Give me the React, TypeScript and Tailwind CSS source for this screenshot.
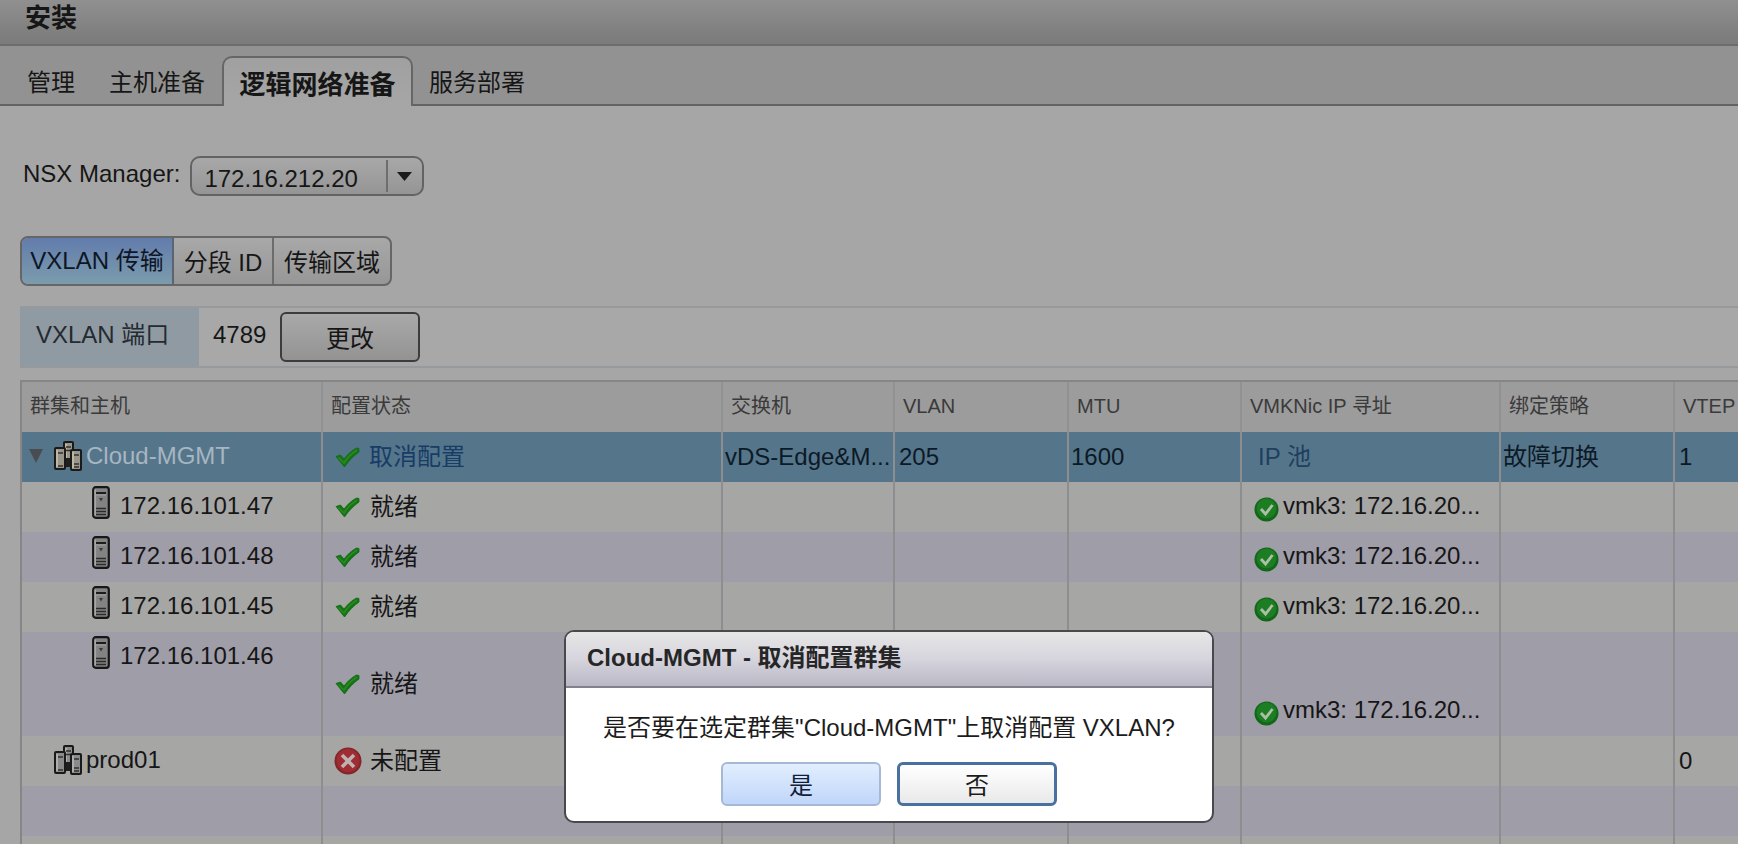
import React from "react";

function ClusterIcon({ warm = false }: { warm?: boolean }) {
  const face = warm ? "#99958a" : "#8b8b8b";
  const lite = warm ? "#bdb8a2" : "#aeaeae";
  return (
    <svg width="28" height="30" viewBox="0 0 28 30" className="shrink-0" aria-hidden="true">
      <rect x="10" y="1" width="9" height="20" rx="1" fill={face} stroke="#1a1a1a" strokeWidth="2" />
      <path d="M12 3v14" stroke={lite} strokeWidth="2" />
      <path d="M12 6h5M12 9.500h5" stroke="#33322e" strokeWidth="1.500" />
      <path d="M11 17h7v9h-7z" fill="#1f1f1f" />
      <rect x="1" y="7" width="10" height="21" rx="1" fill={face} stroke="#1a1a1a" strokeWidth="2" />
      <path d="M3 9v17" stroke={lite} strokeWidth="2" />
      <path d="M4 12h5M4 25h5" stroke="#33322e" strokeWidth="1.500" />
      <rect x="17" y="9" width="10" height="20" rx="1" fill={face} stroke="#1a1a1a" strokeWidth="2" />
      <path d="M19 11v16" stroke={lite} strokeWidth="2" />
      <path d="M20 14h5M20 23h5M20 26h5" stroke="#33322e" strokeWidth="1.500" />
    </svg>
  );
}

function HostIcon() {
  return (
    <svg width="18" height="33" viewBox="0 0 18 33" className="shrink-0" aria-hidden="true">
      <rect x="1.2" y="1.2" width="15.6" height="30.6" rx="2.5" fill="#838383" stroke="#171717" strokeWidth="2.2" />
      <path d="M3.2 3.500v26" stroke="#a6a6a6" strokeWidth="1.8" />
      <path d="M4 7h10" stroke="#1d1d1d" strokeWidth="2" />
      <path d="M4 9h10" stroke="#a3a3a3" strokeWidth="1" />
      <path d="M7 12h4l-2 3.500z" fill="#3a3a3a" />
      <path d="M4 22.500h10M4 25.500h10M4 28.500h10" stroke="#2b2b2b" strokeWidth="1.600" />
    </svg>
  );
}

function CheckIcon() {
  return (
    <svg width="25" height="21" viewBox="0 0 25 21" className="shrink-0" aria-hidden="true">
      <path d="M1 9.500l4.500-1.500 3.500 4C12.500 7.500 16.500 3.500 21.500 1L24 1.500 24 5C18.500 9 14 13.500 9.500 20z" fill="#137317" stroke="#126b14" strokeWidth="0.8" />
      <path d="M3.500 10.500l5.500 5.500C12 11 16.500 6.500 22 3" fill="none" stroke="#2c8a1c" strokeWidth="1.600" />
    </svg>
  );
}

function OkIcon() {
  return (
    <svg width="25" height="25" viewBox="0 0 25 25" className="shrink-0" aria-hidden="true">
      <circle cx="12.5" cy="12.5" r="12" fill="#12661a" />
      <circle cx="12.5" cy="11.5" r="10" fill="#1d7d22" />
      <path d="M7 12l4.500 5 7-9" fill="none" stroke="#adbfa9" strokeWidth="2.800" />
    </svg>
  );
}

function ErrorIcon() {
  return (
    <svg width="28" height="28" viewBox="0 0 28 28" className="shrink-0" aria-hidden="true">
      <circle cx="14" cy="14" r="13.500" fill="#83252b" />
      <circle cx="14" cy="13.500" r="11.500" fill="#a02c33" />
      <path d="M8 8l12 12M20 8L8 20" stroke="#bdb2b0" strokeWidth="3.600" />
    </svg>
  );
}

const columns = [
  { title: "群集和主机", width: "w-[301px]" },
  { title: "配置状态", width: "w-[400px]" },
  { title: "交换机", width: "w-[172px]" },
  { title: "VLAN", width: "w-[174px]" },
  { title: "MTU", width: "w-[173px]" },
  { title: "VMKNic IP 寻址", width: "w-[259px]" },
  { title: "绑定策略", width: "w-[174px]" },
  { title: "VTEP", width: "w-auto" },
];

const cell = "border-r-2 border-[#8e8e91] p-0 overflow-hidden";
const lastCell = "p-0 overflow-hidden";

function HostRow({ ip, shaded = false, tall = false }: { ip: string; shaded?: boolean; tall?: boolean }) {
  return (
    <tr className={`${shaded ? "bg-[#9f9da8]" : "bg-[#a6a6a5]"} ${tall ? "h-[104px]" : "h-[50px]"}`}>
      <td className={`${cell} align-top`}>
        <div className="flex items-start gap-[10px] pt-1 pl-[70px]">
          <HostIcon />
          <span className="pt-1">{ip}</span>
        </div>
      </td>
      <td className={`${cell} align-middle`}>
        <div className="flex items-center gap-[10px] pl-3">
          <CheckIcon />
          <span>就绪</span>
        </div>
      </td>
      <td className={cell} />
      <td className={cell} />
      <td className={cell} />
      <td className={`${cell} align-bottom`}>
        <div className="flex items-end gap-1 pb-[10px] pl-3">
          <OkIcon />
          <span>vmk3: 172.16.20...</span>
        </div>
      </td>
      <td className={cell} />
      <td className={lastCell} />
    </tr>
  );
}

function EmptyRow({ shaded = false }: { shaded?: boolean }) {
  return (
    <tr className={`h-[50px] ${shaded ? "bg-[#9f9da8]" : "bg-[#a6a6a5]"}`}>
      {columns.map((c, i) => (
        <td key={c.title} className={i === columns.length - 1 ? lastCell : cell} />
      ))}
    </tr>
  );
}

export default function App() {
  return (
    <div className="relative h-screen overflow-hidden bg-[#a6a6a6] font-['Liberation_Sans','Noto_Sans_CJK_SC',sans-serif] text-2xl/8 whitespace-nowrap text-[#161616]">
      <header className="flex h-[46px] items-start border-b-2 border-[#6c6c6c] bg-linear-to-b from-[#909090] from-0% via-[#808080] via-70% to-[#7b7b7b] pl-[25px]">
        <h1 className="text-[26px]/9 font-bold">安装</h1>
      </header>

      <nav role="tablist" className="flex h-[60px] items-end border-b-2 border-[#636363] bg-[#929292]">
        <button role="tab" aria-selected="false" className="h-12 pt-[5px] pr-[17px] pl-[27px]">管理</button>
        <button role="tab" aria-selected="false" className="h-12 px-[17px] pt-[5px]">主机准备</button>
        <button
          role="tab"
          aria-selected="true"
          className="-mb-[2px] h-[50px] w-[191px] rounded-t-[10px] border-2 border-b-0 border-[#666666] bg-linear-to-b from-[#a0a0a0] to-[#a6a6a6] pt-[5px] text-[26px]/8 font-bold"
        >
          逻辑网络准备
        </button>
        <button role="tab" aria-selected="false" className="h-12 px-4 pt-[5px]">服务部署</button>
      </nav>

      <main className="flex flex-col pl-5">
        <div className="mt-[50px] flex items-center gap-[10px] pl-[3px]">
          <label htmlFor="manager" className="-mt-1">NSX Manager:</label>
          <div className="relative">
            <select
              id="manager"
              className="block h-10 w-[234px] appearance-none rounded-[10px] border-2 border-[#636363] bg-linear-to-b from-[#a8a8a8] to-[#959595] pt-[5px] pl-3 text-2xl/8"
            >
              <option>172.16.212.20</option>
            </select>
            <span className="pointer-events-none absolute top-1 right-[36px] h-8 w-[2px] bg-[#6e6e6e]" />
            <svg className="pointer-events-none absolute top-4 right-3" width="15" height="9" viewBox="0 0 15 9" aria-hidden="true">
              <path d="M0 0h15L7.500 9z" fill="#1a1a1a" />
            </svg>
          </div>
        </div>

        <div className="mt-10 flex h-[50px] w-[372px] overflow-hidden rounded-lg border-2 border-[#666666] bg-linear-to-b from-[#a8a8a8] to-[#979797]">
          <button className="w-[152px] border-r-2 border-[#5c6470] bg-linear-to-b from-[#627cac] to-[#7c9cac] text-[#0e1626]">VXLAN 传输</button>
          <button className="w-[100px] border-r-2 border-[#6c6c6c] pt-1">分段 ID</button>
          <button className="flex-1 pt-1">传输区域</button>
        </div>

        <section className="mt-5 flex h-[62px] border-y-2 border-[#979a9d] bg-[#a8a8a8]">
          <div className="flex w-[179px] items-center bg-[#8f9aa3] pb-1 pl-4 text-[#242a30]">VXLAN 端口</div>
          <div className="flex items-center pl-[14px]">
            <span className="w-[67px] pb-1">4789</span>
            <button className="h-[50px] w-[140px] rounded-md border-2 border-[#3c3c3c] bg-linear-to-b from-[#a9a9a9] to-[#939393] pt-1">更改</button>
          </div>
        </section>

        <table className="mt-3 w-full table-fixed border-separate border-spacing-0 border-t-2 border-l-2 border-[#868686] text-left">
          <thead>
            <tr className="h-[50px] bg-[#9c9c9c] text-xl text-[#3a3a3a]">
              {columns.map((c, i) => (
                <th
                  key={c.title}
                  className={`${c.width} ${i === columns.length - 1 ? "" : "border-r-2"} overflow-hidden border-[#919191] p-0 pb-[2px] pl-2 font-normal`}
                >
                  {c.title}
                </th>
              ))}
            </tr>
          </thead>
          <tbody>
            <tr className="h-[50px] bg-[#55758b] text-[#0c1a26]">
              <td className={cell}>
                <div className="flex items-center pb-[2px] pl-[7px] text-[#a7b6c1]">
                  <svg width="14" height="14" viewBox="0 0 14 14" className="mr-[11px] shrink-0" aria-hidden="true">
                    <path d="M0 0h14L7 14z" fill="#484d52" />
                  </svg>
                  <ClusterIcon warm />
                  <span className="pl-1">Cloud-MGMT</span>
                </div>
              </td>
              <td className={cell}>
                <div className="flex items-center gap-[9px] pl-3">
                  <CheckIcon />
                  <a href="#unconfigure" className="text-[#173c66]">取消配置</a>
                </div>
              </td>
              <td className={cell}><span className="pl-[2px]">vDS-Edge&amp;M...</span></td>
              <td className={cell}><span className="pl-1">205</span></td>
              <td className={cell}><span className="pl-[2px]">1600</span></td>
              <td className={cell}><a href="#pool" className="pl-4 text-[#1f3f5f]">IP 池</a></td>
              <td className={cell}><span className="pl-[2px]">故障切换</span></td>
              <td className={lastCell}><span className="pl-1">1</span></td>
            </tr>
            <HostRow ip="172.16.101.47" />
            <HostRow ip="172.16.101.48" shaded />
            <HostRow ip="172.16.101.45" />
            <HostRow ip="172.16.101.46" shaded tall />
            <tr className="h-[50px] bg-[#a6a6a5]">
              <td className={cell}>
                <div className="flex items-center gap-1 pb-[2px] pl-8">
                  <ClusterIcon />
                  <span>prod01</span>
                </div>
              </td>
              <td className={cell}>
                <div className="flex items-center gap-2 pl-[11px]">
                  <ErrorIcon />
                  <span>未配置</span>
                </div>
              </td>
              <td className={cell} />
              <td className={cell} />
              <td className={cell} />
              <td className={cell} />
              <td className={cell} />
              <td className={lastCell}><span className="pl-1">0</span></td>
            </tr>
            <EmptyRow shaded />
            <EmptyRow />
          </tbody>
        </table>
      </main>

      <div
        role="dialog"
        aria-modal="true"
        aria-labelledby="dialog-title"
        className="absolute top-[630px] left-[564px] w-[650px] overflow-hidden rounded-[10px] border-2 border-[#49494d] bg-white text-[#1c1c1c]"
      >
        <h2 id="dialog-title" className="h-[56px] border-b-2 border-[#83828c] bg-linear-to-b from-[#e6e6e6] via-[#d6d5de] to-[#b9b8c4] pt-[10px] pl-[21px] text-2xl/8 font-bold text-[#262626]">
          Cloud-MGMT - 取消配置群集
        </h2>
        <p className="pt-6 text-center">是否要在选定群集"Cloud-MGMT"上取消配置 VXLAN?</p>
        <div className="flex justify-center gap-4 pt-[18px] pb-[15px]">
          <button className="h-[44px] w-40 rounded-md border-2 border-[#a5b9d6] bg-linear-to-b from-[#e2eefe] to-[#c0d6fa] pt-1 text-[#10203a]">是</button>
          <button className="h-[44px] w-40 rounded-md border-[3px] border-[#48719f] bg-linear-to-b from-white to-[#e9e9e9] pt-1">否</button>
        </div>
      </div>
    </div>
  );
}
